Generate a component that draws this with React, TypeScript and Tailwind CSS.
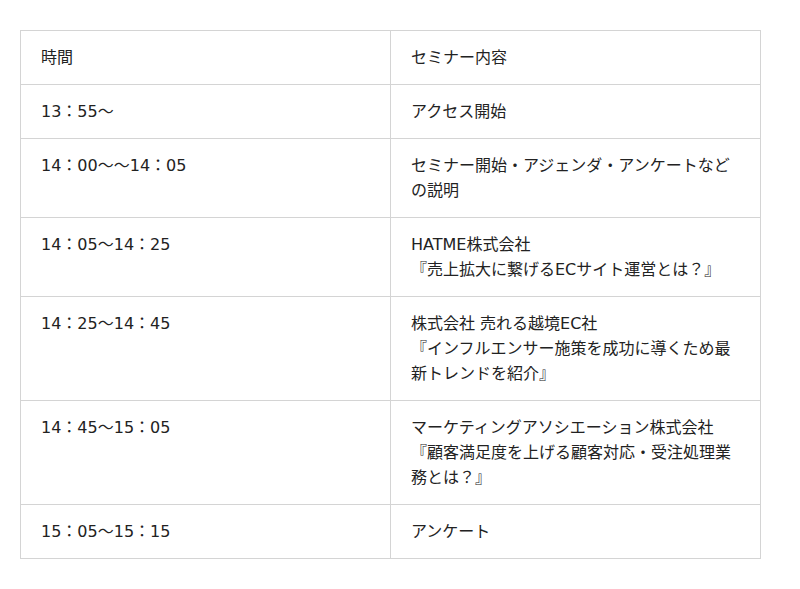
const ROWS: [string, string[]][] = [
  ["13：55〜", ["アクセス開始"]],
  ["14：00〜〜14：05", ["セミナー開始・アジェンダ・アンケートなどの説明"]],
  ["14：05〜14：25", ["HATME株式会社", "『売上拡大に繋げるECサイト運営とは？』"]],
  ["14：25〜14：45", ["株式会社 売れる越境EC社", "『インフルエンサー施策を成功に導くため最新トレンドを紹介』"]],
  ["14：45〜15：05", ["マーケティングアソシエーション株式会社", "『顧客満足度を上げる顧客対応・受注処理業務とは？』"]],
  ["15：05〜15：15", ["アンケート"]],
];

export default function App() {
  return (
    <div
      className="min-h-[589px] bg-white px-5 pt-[30px] text-[16px] leading-[25px] text-[#222]"
      style={{ fontFamily: '"DejaVu Sans", "Noto Sans CJK JP", sans-serif' }}
    >
      <table className="w-[741px] table-fixed border-collapse">
        <thead>
          <tr>
            <th className="w-1/2 border border-[#d4d4d4] px-5 py-[14px] text-left font-normal">時間</th>
            <th className="w-1/2 border border-[#d4d4d4] px-5 py-[14px] text-left font-normal">セミナー内容</th>
          </tr>
        </thead>
        <tbody>
          {ROWS.map(([time, lines]) => (
            <tr key={time}>
              <td className="border border-[#d4d4d4] px-5 py-[14px] align-top">{time}</td>
              <td className="border border-[#d4d4d4] px-5 py-[14px] align-top">
                {lines.map((l) => (
                  <p key={l}>{l}</p>
                ))}
              </td>
            </tr>
          ))}
        </tbody>
      </table>
    </div>
  );
}
